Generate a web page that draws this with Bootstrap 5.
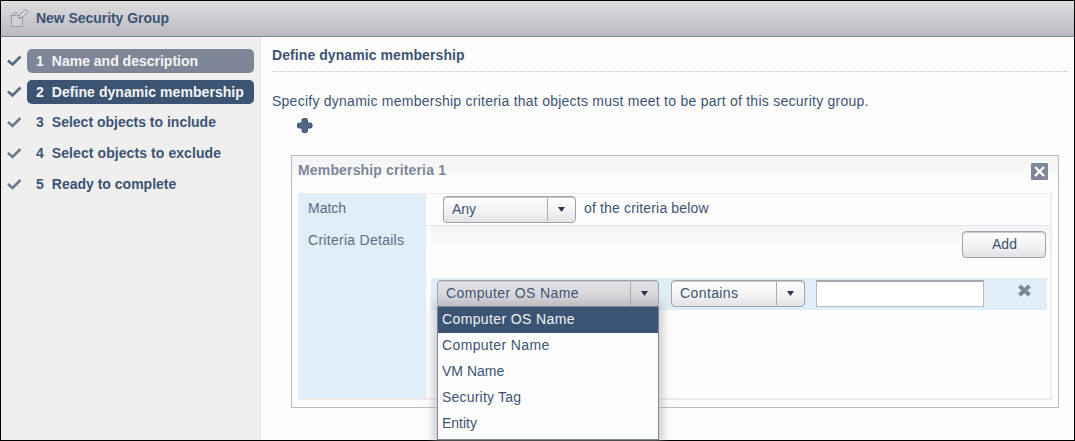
<!DOCTYPE html>
<html lang="en">
<head>
<meta charset="utf-8">
<meta name="viewport" content="width=device-width, initial-scale=1">
<title>New Security Group</title>
<link href="https://cdn.jsdelivr.net/npm/bootstrap@5.3.0/dist/css/bootstrap.min.css" rel="stylesheet">
<style>
:root{--navy:#3c5473;--slate:#7d8798;--pale:#e0eef7;--line:#b9b9c1}
body{height:441px;overflow:hidden;font:14px/18px "Liberation Sans",Arial,sans-serif;color:var(--navy);background:#fdfdfd}
svg{display:block;flex:none}
.wizard{height:441px;border:1px solid #000}
.titlebar{height:36px;padding:0 0 2px 8px;gap:7px;background:linear-gradient(#dddde1,#b9b9c0);border-bottom:1px solid var(--slate)}
.steps{width:260px;background:#efefef;border-right:1px dotted #e2e2e2;padding:12px 6px 0 6px;gap:7px}
.step{height:24px;gap:5px}
.step-label{width:228px;height:24px;border-radius:5px;padding:0 0 1px 9px;gap:8px}
.visited{background:var(--slate);color:#f4f4f4}
.current{background:var(--navy);color:#f4f4f4}
.pending{padding-bottom:2px}
.pane{padding:9px 7px 0 11px}
.pane-head{height:26px;border-bottom:1px dotted #bbb}
.intro{margin-top:20px}
.plus{margin:7px 0 0 24px}
.criteria{width:768px;height:253px;margin:21px 0 0 19px;border:1px solid var(--line);padding:0 6px;background:linear-gradient(#f3f3f5,#fdfdfd 28px)}
.criteria-head{height:37px;color:var(--slate);padding:0 4px 9px 0}
.close-box{width:17px;height:17px;background:var(--slate);border:0;border-radius:1px;padding:0;margin-top:3px}
.grid-box{height:207px;border:2px solid #ededed;border-width:1px 2px 2px 1px}
.labels{width:127px;background:var(--pale);padding:5px 9px;color:#5c6c83}
.labels div+div{margin-top:14px}
.match-row{height:32px;padding:2px 0 0 17px;border-bottom:1px solid #e6e6e8}
.detail-top{height:52px;padding:5px 4px 0 0;margin-left:5px;background:linear-gradient(#f4f4f6,#fdfdfd 26px)}
.combo,.add{height:27px;border:1px solid #a0a1aa;border-radius:4px;background:linear-gradient(#fdfdfd,#f2f2f3 60%,#e2e2e5);color:var(--navy);box-shadow:inset 0 1px #c9c9cf;padding:0}
.add{width:84px;text-align:center;padding:0 0 1px 1px}
.combo-text{padding:0 0 1px 8px}
.arrow{width:28px;height:23px;border-left:1px solid #aaa;display:flex;align-items:center;justify-content:center}
.opened{background:linear-gradient(#e4e4e7,#ceced3)}
.filter{height:32px;margin-left:5px;width:616px;background:var(--pale);padding:2px 16px 0 6px}
.value{width:168px;height:27px;border:1px solid var(--line);border-top:2px solid #a3a4ac;background:#fff;margin-left:11px;border-radius:0;padding:0 4px}
.options{position:absolute;z-index:2;top:25px;left:-1px;width:222px;height:134px;background:#fdfdfd;border:1px solid var(--slate);box-shadow:0 0 8px 4px #a9a9b090}
.options div{height:26.1px;line-height:25px;padding-left:4px}
.options .chosen{background:var(--navy);color:#eef1f5}
.t-intro{letter-spacing:.25px}
.t-crit{letter-spacing:.16px}
.t-os,.t-cn{letter-spacing:.38px}
.t-st{letter-spacing:.2px}
.below{letter-spacing:.16px}
.t-cd{letter-spacing:.28px}
.t-con{letter-spacing:.4px}
.t-head,.s4{letter-spacing:.08px}
.s2{letter-spacing:.06px}
.t-title{letter-spacing:-.05px}
</style>
</head>
<body>
<div class="wizard d-flex flex-column">
  <header class="titlebar d-flex align-items-center fw-bold">
    <svg width="20" height="20" viewBox="0 0 20 20" fill="none" stroke="#858995"><path d="M2.500 7.500h11v11h-11z" fill="#d0d0d5" stroke-dasharray="2 1"/><path d="M2.500 8l3-3h3M10 7.500l7-6 2 2-6 6-3 1z" fill="#dedee1"/></svg>
    <span class="t-title">New Security Group</span>
  </header>
  <div class="d-flex flex-grow-1">
    <nav class="steps d-flex flex-column fw-bold">
      <div class="step d-flex align-items-center"><svg width="15" height="12" viewBox="0 0 15 12"><path d="M1 5.500l4.500 4L13.500 1.500" fill="none" stroke="#5b6b83" stroke-width="2.700"/></svg><div class="step-label visited d-flex align-items-center"><span>1</span><span class="s1">Name and description</span></div></div>
      <div class="step d-flex align-items-center"><svg width="15" height="12" viewBox="0 0 15 12"><path d="M1 5.500l4.500 4L13.500 1.500" fill="none" stroke="#5b6b83" stroke-width="2.700"/></svg><div class="step-label current d-flex align-items-center"><span>2</span><span class="s2">Define dynamic membership</span></div></div>
      <div class="step d-flex align-items-center"><svg width="15" height="12" viewBox="0 0 15 12"><path d="M1 5l4.500 4L13.500 1" fill="none" stroke="#6c7a90" stroke-width="2.500"/></svg><div class="step-label pending d-flex align-items-center"><span>3</span><span class="s3">Select objects to include</span></div></div>
      <div class="step d-flex align-items-center"><svg width="15" height="12" viewBox="0 0 15 12"><path d="M1 5l4.500 4L13.500 1" fill="none" stroke="#6c7a90" stroke-width="2.500"/></svg><div class="step-label pending d-flex align-items-center"><span>4</span><span class="s4">Select objects to exclude</span></div></div>
      <div class="step d-flex align-items-center"><svg width="15" height="12" viewBox="0 0 15 12"><path d="M1 5l4.500 4L13.500 1" fill="none" stroke="#6c7a90" stroke-width="2.500"/></svg><div class="step-label pending d-flex align-items-center"><span>5</span><span class="s5">Ready to complete</span></div></div>
    </nav>
    <main class="pane flex-grow-1">
      <div class="pane-head fw-bold"><span class="t-head">Define dynamic membership</span></div>
      <div class="intro"><span class="t-intro">Specify dynamic membership criteria that objects must meet to be part of this security group.</span></div>
      <svg class="plus" width="17" height="17" viewBox="0 0 17 17"><path d="M7 1.500h3.500l1 1V6H15l1 1v3l-1 1h-3.500v3.500l-1 1H7l-1-1V11H2.500l-1-1V7l1-1H6V2.500z" fill="#526683" stroke="#3c5473" stroke-linejoin="round"/></svg>
      <section class="criteria">
        <div class="criteria-head d-flex align-items-center justify-content-between fw-bold">
          <span class="t-crit">Membership criteria 1</span>
          <button class="close-box d-flex align-items-center justify-content-center" aria-label="Close"><svg width="11" height="11" viewBox="0 0 11 11"><path d="M1 1l9 9m0-9l-9 9" stroke="#fff" stroke-width="2.400"/></svg></button>
        </div>
        <div class="grid-box d-flex">
          <div class="labels"><div>Match</div><div class="t-cd">Criteria Details</div></div>
          <div class="flex-grow-1">
            <div class="match-row d-flex">
              <div class="combo d-flex align-items-center justify-content-between" style="width:133px"><span class="combo-text">Any</span><span class="arrow"><svg width="7" height="5"><path d="M0 0h7L3.500 5z" fill="#263950"/></svg></span></div>
              <span class="below ms-2" style="margin-top:3px">of the criteria below</span>
            </div>
            <div class="detail-top d-flex justify-content-end align-items-start"><button class="add">Add</button></div>
            <div class="filter d-flex">
              <div class="combo opened position-relative d-flex align-items-center justify-content-between" style="width:222px"><span class="combo-text t-os">Computer OS Name</span><span class="arrow"><svg width="7" height="5"><path d="M0 0h7L3.500 5z" fill="#263950"/></svg></span>
                <div class="options"><div class="chosen"><span class="t-os">Computer OS Name</span></div><div><span class="t-cn">Computer Name</span></div><div><span class="t-vm">VM Name</span></div><div><span class="t-st">Security Tag</span></div><div>Entity</div></div>
              </div>
              <div class="combo d-flex align-items-center justify-content-between" style="width:134px;margin-left:12px"><span class="combo-text t-con">Contains</span><span class="arrow"><svg width="7" height="5"><path d="M0 0h7L3.500 5z" fill="#263950"/></svg></span></div>
              <input class="value" type="text" aria-label="Value">
              <svg class="ms-auto" style="margin-top:4px" width="13" height="13" viewBox="0 0 13 13"><path d="M1.500 2l10 9m0-9l-10 9" stroke="#7d8798" stroke-width="3.800"/></svg>
            </div>
          </div>
        </div>
      </section>
    </main>
  </div>
</div>
<script src="https://cdn.jsdelivr.net/npm/bootstrap@5.3.0/dist/js/bootstrap.bundle.min.js"></script>
</body>
</html>
